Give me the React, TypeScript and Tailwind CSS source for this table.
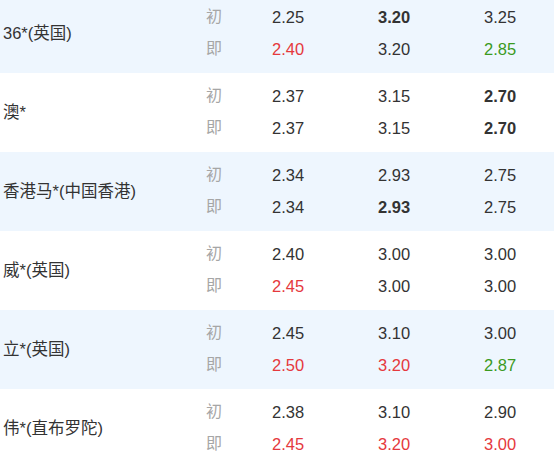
type Cell = { v: string; c?: "up" | "down"; b?: boolean };

const rows: { name: string; open: Cell[]; live: Cell[] }[] = [
  {
    name: "36*(英国)",
    open: [{ v: "2.25" }, { v: "3.20", b: true }, { v: "3.25" }],
    live: [{ v: "2.40", c: "up" }, { v: "3.20" }, { v: "2.85", c: "down" }],
  },
  {
    name: "澳*",
    open: [{ v: "2.37" }, { v: "3.15" }, { v: "2.70", b: true }],
    live: [{ v: "2.37" }, { v: "3.15" }, { v: "2.70", b: true }],
  },
  {
    name: "香港马*(中国香港)",
    open: [{ v: "2.34" }, { v: "2.93" }, { v: "2.75" }],
    live: [{ v: "2.34" }, { v: "2.93", b: true }, { v: "2.75" }],
  },
  {
    name: "威*(英国)",
    open: [{ v: "2.40" }, { v: "3.00" }, { v: "3.00" }],
    live: [{ v: "2.45", c: "up" }, { v: "3.00" }, { v: "3.00" }],
  },
  {
    name: "立*(英国)",
    open: [{ v: "2.45" }, { v: "3.10" }, { v: "3.00" }],
    live: [{ v: "2.50", c: "up" }, { v: "3.20", c: "up" }, { v: "2.87", c: "down" }],
  },
  {
    name: "伟*(直布罗陀)",
    open: [{ v: "2.38" }, { v: "3.10" }, { v: "2.90" }],
    live: [{ v: "2.45", c: "up" }, { v: "3.20", c: "up" }, { v: "3.00", c: "up" }],
  },
];

function Line({ label, cells }: { label: string; cells: Cell[] }) {
  return (
    <div className="flex h-[32px] items-center">
      <span className="w-[66px] shrink-0 text-[#a6a6a6]">{label}</span>
      {cells.map((cell, i) => (
        <span
          key={i}
          className={
            "shrink-0 text-[16.5px] " +
            (i < 2 ? "w-[106px] " : "w-[69px] ") +
            (cell.b ? "font-bold " : "") +
            (cell.c === "up" ? "text-[#e5393d]" : cell.c === "down" ? "text-[#3b9a1f]" : "text-[#333333]")
          }
        >
          {cell.v}
        </span>
      ))}
    </div>
  );
}

export default function App() {
  return (
    <div
      className="mt-[-6px] w-[554px] overflow-hidden bg-white text-[16px] text-[#333333]"
      style={{ fontFamily: '"Liberation Sans", "Noto Sans CJK SC", sans-serif' }}
    >
      {rows.map((row, i) => (
        <div
          key={row.name}
          className={"flex h-[79px] items-center " + (i % 2 === 0 ? "bg-[#eef6fe]" : "bg-white")}
        >
          <div className="w-[206px] shrink-0 pl-[3px] text-[16.5px]">{row.name}</div>
          <div className="flex flex-col pb-[1px]">
            <Line label="初" cells={row.open} />
            <Line label="即" cells={row.live} />
          </div>
        </div>
      ))}
    </div>
  );
}
